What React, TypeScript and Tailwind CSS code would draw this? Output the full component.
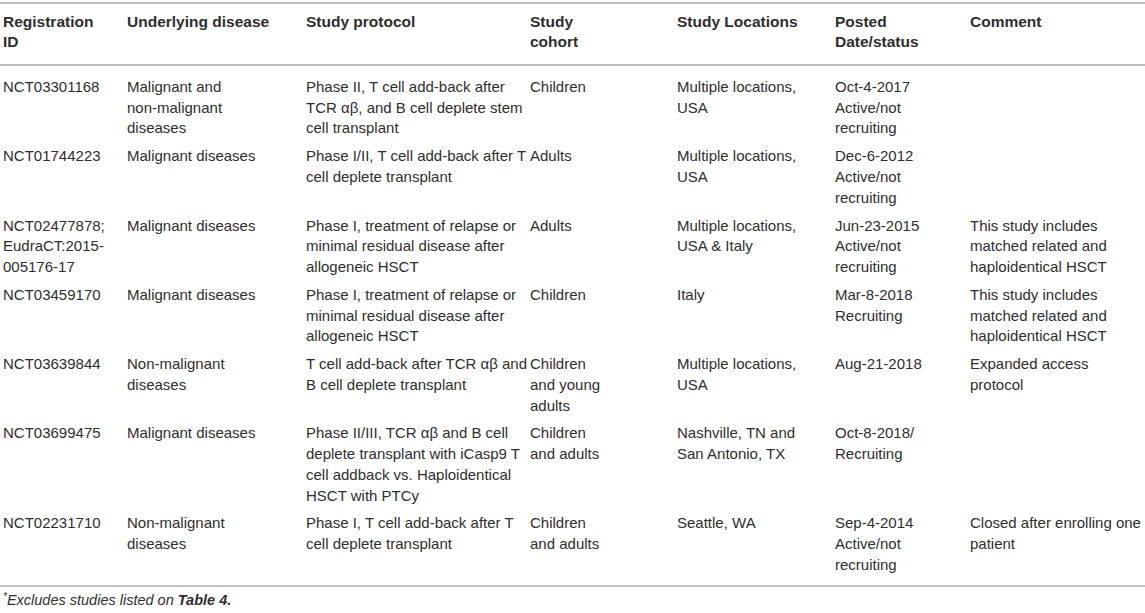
import React from 'react';

const cols = 'grid grid-cols-[124px_179px_224px_147px_158px_135px_178px]';

const headers = [
  ['Registration', 'ID'],
  ['Underlying disease'],
  ['Study protocol'],
  ['Study', 'cohort'],
  ['Study Locations'],
  ['Posted', 'Date/status'],
  ['Comment'],
];

const rows: string[][][] = [
  [
    ['NCT03301168'],
    ['Malignant and', 'non-malignant', 'diseases'],
    ['Phase II, T cell add-back after', 'TCR αβ, and B cell deplete stem', 'cell transplant'],
    ['Children'],
    ['Multiple locations,', 'USA'],
    ['Oct-4-2017', 'Active/not', 'recruiting'],
    [],
  ],
  [
    ['NCT01744223'],
    ['Malignant diseases'],
    ['Phase I/II, T cell add-back after T', 'cell deplete transplant'],
    ['Adults'],
    ['Multiple locations,', 'USA'],
    ['Dec-6-2012', 'Active/not', 'recruiting'],
    [],
  ],
  [
    ['NCT02477878;', 'EudraCT:2015-', '005176-17'],
    ['Malignant diseases'],
    ['Phase I, treatment of relapse or', 'minimal residual disease after', 'allogeneic HSCT'],
    ['Adults'],
    ['Multiple locations,', 'USA & Italy'],
    ['Jun-23-2015', 'Active/not', 'recruiting'],
    ['This study includes', 'matched related and', 'haploidentical HSCT'],
  ],
  [
    ['NCT03459170'],
    ['Malignant diseases'],
    ['Phase I, treatment of relapse or', 'minimal residual disease after', 'allogeneic HSCT'],
    ['Children'],
    ['Italy'],
    ['Mar-8-2018', 'Recruiting'],
    ['This study includes', 'matched related and', 'haploidentical HSCT'],
  ],
  [
    ['NCT03639844'],
    ['Non-malignant', 'diseases'],
    ['T cell add-back after TCR αβ and', 'B cell deplete transplant'],
    ['Children', 'and young', 'adults'],
    ['Multiple locations,', 'USA'],
    ['Aug-21-2018'],
    ['Expanded access', 'protocol'],
  ],
  [
    ['NCT03699475'],
    ['Malignant diseases'],
    ['Phase II/III, TCR αβ and B cell', 'deplete transplant with iCasp9 T', 'cell addback vs. Haploidentical', 'HSCT with PTCy'],
    ['Children', 'and adults'],
    ['Nashville, TN and', 'San Antonio, TX'],
    ['Oct-8-2018/', 'Recruiting'],
    [],
  ],
  [
    ['NCT02231710'],
    ['Non-malignant', 'diseases'],
    ['Phase I, T cell add-back after T', 'cell deplete transplant'],
    ['Children', 'and adults'],
    ['Seattle, WA'],
    ['Sep-4-2014', 'Active/not', 'recruiting'],
    ['Closed after enrolling one', 'patient'],
  ],
];

const Cell = ({ lines }: { lines: string[] }) => (
  <div className="pl-[3px] whitespace-nowrap">
    {lines.map((l, i) => (
      <div key={i}>{l}</div>
    ))}
  </div>
);

export default function App() {
  return (
    <div className="w-[1145px] h-[613px] bg-white text-[#2e2e2e] font-['Liberation_Sans',Arial,sans-serif] text-[15px] leading-[20.7px] pt-[2px] overflow-hidden">
      {/* Header */}
      <div className={`${cols} border-t-2 border-b-2 border-[#bfbfbf] pt-[7.5px] pb-[11.5px] font-bold text-[15.5px]`}>
        {headers.map((h, i) => (
          <Cell key={i} lines={h} />
        ))}
      </div>

      {/* Body */}
      <div className="border-b-2 border-[#bfbfbf] pt-[7px] pb-[6px]">
        {rows.map((r, i) => (
          <div key={i} className={`${cols} py-[3.6px]`}>
            {r.map((c, j) => (
              <Cell key={j} lines={c} />
            ))}
          </div>
        ))}
      </div>

      <div className="pl-[3px] pt-[3px] text-[14.5px] leading-[20px] italic">
        <sup className="text-[10px]">*</sup>Excludes studies listed on <span className="font-bold">Table 4.</span>
      </div>
    </div>
  );
}
